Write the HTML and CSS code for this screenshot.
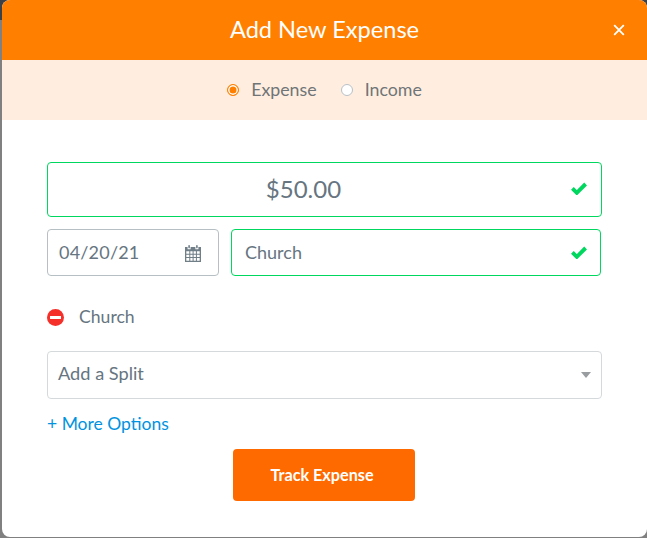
FILE: index.html
```html
<!DOCTYPE html>
<html lang="en">
<head>
<meta charset="utf-8">
<title>Add New Expense</title>
<link rel="stylesheet" href="styles.css">
</head>
<body>
<div class="modal">
  <header class="head">
    <h1 class="title">Add New Expense</h1>
    <svg class="close" viewBox="0 0 12 12" width="12" height="12"><path d="M1.200 1.200l9.600 9.600M10.800 1.200l-9.600 9.600" stroke="#fff" stroke-width="1.800" fill="none"/></svg>
  </header>
  <div class="types">
    <span class="radio radio-on"></span><span class="type-label">Expense</span>
    <span class="radio radio-off"></span><span class="type-label">Income</span>
  </div>
  <form class="form">
    <div class="field field-amount valid">
      <span class="amount">$50.00</span>
      <svg class="check" viewBox="0 0 16 13" width="16" height="13"><path d="M1.400 6.400l4.400 4.400L14.600 2" stroke="#00d75f" stroke-width="3.900" fill="none"/></svg>
    </div>
    <div class="row">
      <div class="field field-date">
        <span class="lift">04/20/21</span>
        <svg class="cal" viewBox="0 0 18 18" width="18" height="18">
          <path fill="#6f7e87" d="M1 3h2.600v2.200h3V3h4.800v2.200h3V3H17v15H1z"/>
          <rect x="4.300" y="1" width="1.600" height="3.400" rx=".8" fill="#6f7e87"/>
          <rect x="12.100" y="1" width="1.600" height="3.400" rx=".8" fill="#6f7e87"/>
          <path fill="#fff" d="M2.300 7.200h3v2.600h-3zM6.300 7.200h2.300v2.600H6.300zM9.600 7.200h2.300v2.600H9.600zM12.900 7.200h2.800v2.600h-2.800zM2.300 10.800h3v2.300h-3zM6.300 10.800h2.300v2.300H6.300zM9.600 10.800h2.300v2.300H9.600zM12.900 10.800h2.800v2.300h-2.800zM2.300 14.100h3v2.600h-3zM6.300 14.100h2.300v2.600H6.300zM9.600 14.100h2.300v2.600H9.600zM12.900 14.100h2.800v2.600h-2.800z"/>
        </svg>
      </div>
      <div class="field field-category valid">
        <span class="lift">Church</span>
        <svg class="check" viewBox="0 0 16 13" width="16" height="13"><path d="M1.400 6.400l4.400 4.400L14.600 2" stroke="#00d75f" stroke-width="3.900" fill="none"/></svg>
      </div>
    </div>
    <div class="tag">
      <span class="minus"></span><span class="lift">Church</span>
    </div>
    <div class="field field-split">
      <span class="lift-2">Add a Split</span>
      <span class="caret"></span>
    </div>
    <a class="more" href="#">+ More Options</a>
    <div class="actions"><button class="submit" type="button">Track Expense</button></div>
  </form>
</div>
</body>
</html>
```
FILE: styles.css
```css
* { box-sizing: border-box; }
html, body { margin: 0; height: 100%; }
body {
  background: linear-gradient(#3a4248 0 20px, #808080 20px);
  font-family: Lato, "Open Sans", sans-serif;
  color: #66757f;
  overflow: hidden;
}
.modal {
  margin-left: 2px;
  height: 537px;
  background: #fff;
  border-radius: 8px;
  overflow: hidden;
}
.head {
  height: 60px;
  background: #ff8000;
  display: flex;
  align-items: center;
  justify-content: center;
  position: relative;
  padding-bottom: 2px;
}
.title {
  margin: 0;
  font-size: 23.6px;
  font-weight: 400;
  color: #fff;
}
.close { position: absolute; right: 22px; top: 24px; }
.types {
  height: 60px;
  background: #ffeee0;
  display: flex;
  align-items: center;
  justify-content: center;
  font-size: 17.8px;
  padding-bottom: 3px;
  color: #6f7577;
}
.radio {
  width: 12px;
  height: 12px;
  border-radius: 50%;
  background: #fff;
  flex: none;
  margin-top: 3px;
}
.radio-on { border: 1.5px solid #ff8000; box-shadow: inset 0 0 0 1.5px #fff; background: #ff8000; }
.radio-off { border: 1px solid #b8c0c6; }
.type-label { margin-left: 12px; }
.type-label:nth-of-type(2) { margin-right: 24px; }
.form { padding: 42px 45px 0; }
.field {
  display: flex;
  align-items: center;
  justify-content: space-between;
  border: 1px solid #b5bfc4;
  border-radius: 4px;
  background: #fff;
  font-size: 18px;
}
.valid { border-color: #00d75f; }
.field-amount {
  height: 55px;
  position: relative;
  justify-content: center;
  font-size: 24px;
  padding: 0 42px 2px 0;
}
.field-amount .check { position: absolute; right: 14px; top: 19px; }
.lift { margin-bottom: 2px; }
.lift-2 { margin-bottom: 4px; }
.row { display: flex; gap: 12px; margin-top: 12px; }
.field-date { width: 172px; height: 47px; padding: 0 16px 0 11px; letter-spacing: .2px; }
.field-category { width: 370px; height: 47px; padding: 0 13px; }
.tag {
  display: flex;
  align-items: center;
  gap: 15px;
  margin-top: 30px;
  height: 22px;
  font-size: 17.6px;
}
.minus {
  width: 17px;
  height: 17px;
  border-radius: 50%;
  background: #f5302a;
  position: relative;
  flex: none;
}
.minus::after {
  content: "";
  position: absolute;
  left: 3px;
  right: 3px;
  top: 7px;
  height: 3px;
  background: #fff;
}
.field-split {
  margin-top: 23px;
  height: 48px;
  padding: 0 10px 0 10px;
  border-color: #d5d9dc;
  font-size: 18.2px;
}
.caret {
  width: 0;
  height: 0;
  border-left: 5.500px solid transparent;
  border-right: 5.500px solid transparent;
  border-top: 6px solid #999da0;
}
.more {
  display: block;
  margin-top: 14px;
  height: 22px;
  font-size: 17.500px;
  line-height: 22px;
  color: #0093e0;
  text-decoration: none;
}
.actions { display: flex; justify-content: center; margin-top: 14px; padding-right: 1px; }
.submit {
  width: 182px;
  height: 52px;
  border: 0;
  border-radius: 4px;
  background: #ff6a00;
  color: #fff;
  font: 700 16.2px Lato, sans-serif;
  padding: 0 4px 2px 0;
}
```
